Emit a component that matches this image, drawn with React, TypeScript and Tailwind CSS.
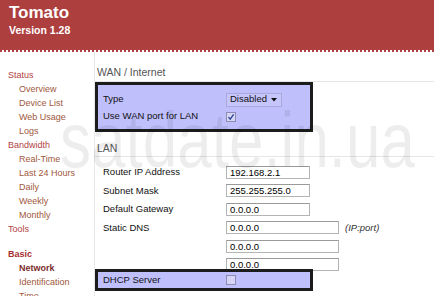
import React from 'react';

type NavItem = { label: string; sub?: boolean; bold?: boolean; gap?: boolean };

const nav: NavItem[] = [
  { label: 'Status' },
  { label: 'Overview', sub: true },
  { label: 'Device List', sub: true },
  { label: 'Web Usage', sub: true },
  { label: 'Logs', sub: true },
  { label: 'Bandwidth' },
  { label: 'Real-Time', sub: true },
  { label: 'Last 24 Hours', sub: true },
  { label: 'Daily', sub: true },
  { label: 'Weekly', sub: true },
  { label: 'Monthly', sub: true },
  { label: 'Tools' },
  { label: 'Basic', bold: true, gap: true },
  { label: 'Network', sub: true, bold: true },
  { label: 'Identification', sub: true },
  { label: 'Time', sub: true },
];

function Checkbox({ checked }: { checked?: boolean }) {
  return (
    <div className="w-[10px] h-[10px] border border-[#8c8cb4] bg-[#d6d6f4] flex items-center justify-center">
      {checked && (
        <svg width="8" height="8" viewBox="0 0 8 8">
          <path d="M1.5 4.2 L3.2 6.2 L6.6 1.4" fill="none" stroke="#2a3f96" strokeWidth="1.3" />
        </svg>
      )}
    </div>
  );
}

function TextBox({ value, wide }: { value: string; wide?: boolean }) {
  return (
    <div
      className={`h-[13px] border border-[#b4b4b4] border-t-[#9a9a9a] bg-white pl-[3px] text-[9.5px] leading-[11px] text-black ${
        wide ? 'w-[113px]' : 'w-[84px]'
      }`}
    >
      {value}
    </div>
  );
}

function FieldRow({ label, children, last }: { label: string; children: React.ReactNode; last?: boolean }) {
  return (
    <div className={`flex pl-[8px] ${last ? 'h-[13.5px] items-start pt-[2px]' : 'h-[18.5px] items-center'}`}>
      <div className="w-[123px] text-[9.5px] text-[#111]">{label}</div>
      {children}
    </div>
  );
}

export default function App() {
  return (
    <div className="relative w-[434px] h-[296px] overflow-hidden bg-white font-['Liberation_Sans',Arial,sans-serif]">
      <header className="h-[50px] bg-[#ad3f3f] px-[9px] pt-[3px] text-white">
        <div className="text-[17px] font-bold leading-[20px]">Tomato</div>
        <div className="text-[10.5px] font-bold leading-[13px] mt-[1px]">Version 1.28</div>
      </header>
      <div className="h-[2px] border-b-2 border-dotted border-[#ad3f3f]" />

      <div className="flex">
        <nav className="w-[95px] shrink-0 border-r border-[#e8e8e8] h-[244px] pt-[16px]">
          {nav.map((n) => (
            <div
              key={n.label}
              className={`h-[14px] leading-[14px] text-[9px] ${n.sub ? 'pl-[19px]' : 'pl-[8px]'} ${
                n.gap ? 'mt-[11px]' : ''
              } ${n.bold ? 'font-bold' : ''} ${
                n.sub ? (n.bold ? 'text-[#7c2e2e]' : 'text-[#a0583c]') : n.bold ? 'text-[#a83030]' : 'text-[#b24444]'
              }`}
            >
              {n.label}
            </div>
          ))}
        </nav>

        <main className="flex-1">
          <div className="h-[30px] border-b border-[#e6e6e6] flex items-end pb-[3px] pl-[2px] text-[10.5px] leading-[12px] text-[#555]">
            WAN / Internet
          </div>
          <div className="w-[218px] h-[50px] border-[3px] border-[#1c1c1c] bg-[#bfbffc] pt-[6px]">
            <div className="flex items-center h-[17px] pl-[5px]">
              <div className="w-[123px] text-[9.5px] text-[#111]">Type</div>
              <div className="w-[56px] h-[14px] border border-[#a9a9dc] bg-[#c6c6fd] flex items-center justify-between pl-[3px] pr-[4px] text-[9.5px] text-[#111]">
                <span>Disabled</span>
                <svg width="6" height="4" viewBox="0 0 6 4">
                  <path d="M0 0 H6 L3 3.5 Z" fill="#111" />
                </svg>
              </div>
            </div>
            <div className="flex items-center h-[17px] pl-[5px]">
              <div className="w-[123px] text-[9.5px] text-[#111]">Use WAN port for LAN</div>
              <Checkbox checked />
            </div>
          </div>

          <div className="h-[25px] border-b border-[#e6e6e6] flex items-end pb-[2px] pl-[2px] text-[10.5px] leading-[12px] text-[#555]">
            LAN
          </div>
          <div className="pt-[6px]">
            <FieldRow label="Router IP Address">
              <TextBox value="192.168.2.1" />
            </FieldRow>
            <FieldRow label="Subnet Mask">
              <TextBox value="255.255.255.0" />
            </FieldRow>
            <FieldRow label="Default Gateway">
              <TextBox value="0.0.0.0" />
            </FieldRow>
            <FieldRow label="Static DNS">
              <TextBox value="0.0.0.0" wide />
              <span className="ml-[6px] text-[9.5px] italic text-[#333]">(IP:port)</span>
            </FieldRow>
            <FieldRow label="">
              <TextBox value="0.0.0.0" wide />
            </FieldRow>
            <FieldRow label="" last>
              <TextBox value="0.0.0.0" wide />
            </FieldRow>
          </div>
          <div className="relative w-[218px] h-[22px] border-[3px] border-[#1c1c1c] bg-[#bfbffc] flex items-center pl-[5px]">
            <div className="w-[123px] text-[9.5px] text-[#111]">DHCP Server</div>
            <Checkbox />
          </div>
        </main>
      </div>

      <div className="pointer-events-none absolute left-[60px] top-[110px] text-[62px] leading-none text-black/[0.07] scale-y-125 whitespace-nowrap">
        satdate.in.ua
      </div>
    </div>
  );
}
